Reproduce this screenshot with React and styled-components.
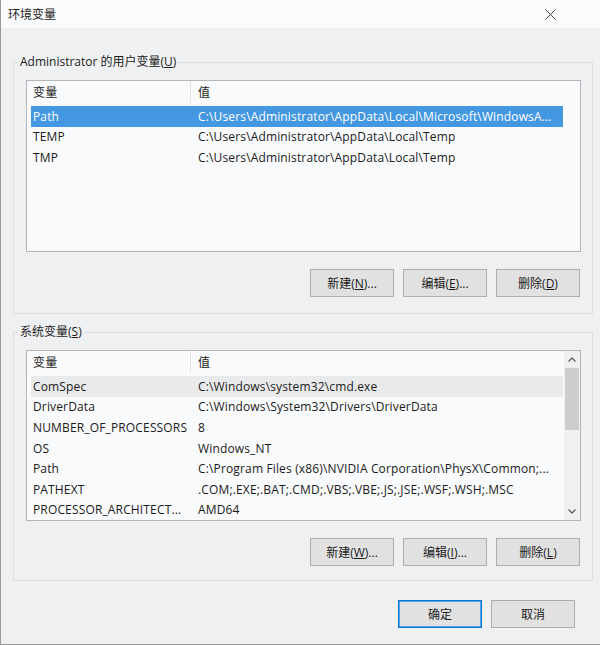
import React from 'react';
import styled, { createGlobalStyle } from 'styled-components';

const GlobalStyle = createGlobalStyle`
  html, body {
    margin: 0;
    padding: 0;
  }
  body {
    font-family: "Open Sans", "Noto Sans CJK SC", sans-serif;
    font-size: 12px;
    color: #1b1b1b;
    background: #eff0f2;
  }
`;

const userVars = [
  { name: 'Path', value: 'C:\\Users\\Administrator\\AppData\\Local\\Microsoft\\WindowsA...' },
  { name: 'TEMP', value: 'C:\\Users\\Administrator\\AppData\\Local\\Temp' },
  { name: 'TMP', value: 'C:\\Users\\Administrator\\AppData\\Local\\Temp' },
];

const systemVars = [
  { name: 'ComSpec', value: 'C:\\Windows\\system32\\cmd.exe' },
  { name: 'DriverData', value: 'C:\\Windows\\System32\\Drivers\\DriverData' },
  { name: 'NUMBER_OF_PROCESSORS', value: '8' },
  { name: 'OS', value: 'Windows_NT' },
  { name: 'Path', value: 'C:\\Program Files (x86)\\NVIDIA Corporation\\PhysX\\Common;...' },
  { name: 'PATHEXT', value: '.COM;.EXE;.BAT;.CMD;.VBS;.VBE;.JS;.JSE;.WSF;.WSH;.MSC' },
  { name: 'PROCESSOR_ARCHITECT...', value: 'AMD64' },
];

const App = () => (
  <>
    <GlobalStyle />
    <Window>
      <TitleBar>
        <span>环境变量</span>
        <CloseIcon viewBox="0 0 12 12">
          <path d="M0.5 0.5 L11.5 11.5 M11.5 0.5 L0.5 11.5" />
        </CloseIcon>
      </TitleBar>
      <Body>
        <Group $top={26}>
          <Legend>
            Administrator 的用户变量(<u>U</u>)
          </Legend>
          <ListBox $height={172}>
            <ListInner>
              <VarTable rows={userVars} selected={0} />
            </ListInner>
          </ListBox>
          <ButtonRow $top={17}>
            <Button>新建(<u>N</u>)...</Button>
            <Button>编辑(<u>E</u>)...</Button>
            <Button>删除(<u>D</u>)</Button>
          </ButtonRow>
        </Group>
        <Group $top={10} $bottom={14}>
          <Legend>
            系统变量(<u>S</u>)
          </Legend>
          <ListBox $height={171}>
            <ListInner>
              <VarTable rows={systemVars} hot={0} />
            </ListInner>
            <ScrollBar>
              <ArrowBox>
                <Chevron viewBox="0 0 8 5">
                  <path d="M0.5 4.5 L4 1 L7.5 4.5" />
                </Chevron>
              </ArrowBox>
              <Thumb />
              <Track />
              <ArrowBox>
                <Chevron viewBox="0 0 8 5">
                  <path d="M0.5 0.5 L4 4 L7.5 0.5" />
                </Chevron>
              </ArrowBox>
            </ScrollBar>
          </ListBox>
          <ButtonRow $top={17}>
            <Button>新建(<u>W</u>)...</Button>
            <Button>编辑(<u>I</u>)...</Button>
            <Button>删除(<u>L</u>)</Button>
          </ButtonRow>
        </Group>
        <Footer>
          <Button $primary>确定</Button>
          <Button>取消</Button>
        </Footer>
      </Body>
    </Window>
  </>
);

const VarTable = ({ rows, selected, hot }) => (
  <>
    <HeaderRow>
      <NameCell $head>变量</NameCell>
      <ValueCell>值</ValueCell>
    </HeaderRow>
    <Rows>
      {rows.map((row, i) => (
        <Row key={row.name + i} $selected={i === selected} $hot={i === hot}>
          <NameCell>{row.name}</NameCell>
          <ValueCell>{row.value}</ValueCell>
        </Row>
      ))}
    </Rows>
  </>
);

const Window = styled.div`
  width: 600px;
  height: 645px;
  box-sizing: border-box;
  border-left: 1px solid #9a9a9a;
  border-bottom: 1px solid #9a9a9a;
  background: #eff0f2;
  display: flex;
  flex-direction: column;
  overflow: hidden;
`;

const TitleBar = styled.div`
  height: 28px;
  flex-shrink: 0;
  background: #fafbfc;
  display: flex;
  align-items: center;
  justify-content: space-between;
  padding: 0 44px 0 7px;
  font-size: 12px;
  color: #222;
`;

const CloseIcon = styled.svg`
  width: 11px;
  height: 11px;
  stroke: #333;
  stroke-width: 1;
  fill: none;
`;

const Body = styled.div`
  padding: 0 7px 0 12px;
  display: flex;
  flex-direction: column;
`;

const Group = styled.fieldset`
  margin: ${p => p.$top}px 0 0 0;
  border: 1px solid #dcdde0;
  padding: 10px 11px ${p => p.$bottom ?? 16}px 12px;
  min-width: 0;
`;

const Legend = styled.legend`
  margin-left: -8px;
  padding: 0 2px;
  line-height: 16px;
  font-size: 12px;
  color: #1b1b1b;
`;

const ListBox = styled.div`
  height: ${p => p.$height}px;
  box-sizing: border-box;
  border: 1px solid #b4b6ba;
  background: #f9fafc;
  display: flex;
  overflow: hidden;
`;

const ListInner = styled.div`
  flex: 1;
  padding-left: 4px;
  min-width: 0;
  letter-spacing: 0.15px;
`;

const HeaderRow = styled.div`
  display: flex;
  height: 22px;
  align-items: center;
`;

const Rows = styled.div`
  margin-top: 3px;
`;

const Row = styled.div`
  display: flex;
  align-items: center;
  width: 532px;
  height: 20.6px;
  background: ${p => (p.$selected ? '#4497e1' : p.$hot ? '#e9eaec' : 'transparent')};
  color: ${p => (p.$selected ? '#fff' : '#1b1b1b')};
`;

const NameCell = styled.div`
  width: 160px;
  flex-shrink: 0;
  box-sizing: border-box;
  padding-left: 2px;
  white-space: nowrap;
  overflow: hidden;
  align-self: stretch;
  display: flex;
  align-items: center;
  border-right: ${p => (p.$head ? '1px solid #e3e4e6' : 'none')};
`;

const ValueCell = styled.div`
  flex: 1;
  padding-left: 7px;
  white-space: nowrap;
  overflow: hidden;
`;

const ScrollBar = styled.div`
  width: 16px;
  flex-shrink: 0;
  background: #f0f0f0;
  display: flex;
  flex-direction: column;
`;

const ArrowBox = styled.div`
  height: 17px;
  display: flex;
  align-items: center;
  justify-content: center;
`;

const Chevron = styled.svg`
  width: 8px;
  height: 5px;
  stroke: #606060;
  stroke-width: 1.3;
  fill: none;
`;

const Thumb = styled.div`
  height: 62px;
  margin: 0 1px;
  background: #cdcdcd;
`;

const Track = styled.div`
  flex: 1;
`;

const ButtonRow = styled.div`
  display: flex;
  justify-content: flex-end;
  gap: 9px;
  margin-top: ${p => p.$top}px;
  padding-right: 1px;
`;

const Button = styled.button`
  width: 84px;
  height: 28px;
  box-sizing: border-box;
  padding: 0;
  font-family: inherit;
  font-size: 12px;
  color: #1b1b1b;
  background: #e1e1e1;
  border: 1px solid ${p => (p.$primary ? '#0078d7' : '#adadad')};
  box-shadow: ${p => (p.$primary ? 'inset 0 0 0 1px #5aa2e6' : 'none')};
`;

const Footer = styled.div`
  display: flex;
  justify-content: flex-end;
  gap: 9px;
  padding: 19px 18px 0 0;
`;

export default App;
